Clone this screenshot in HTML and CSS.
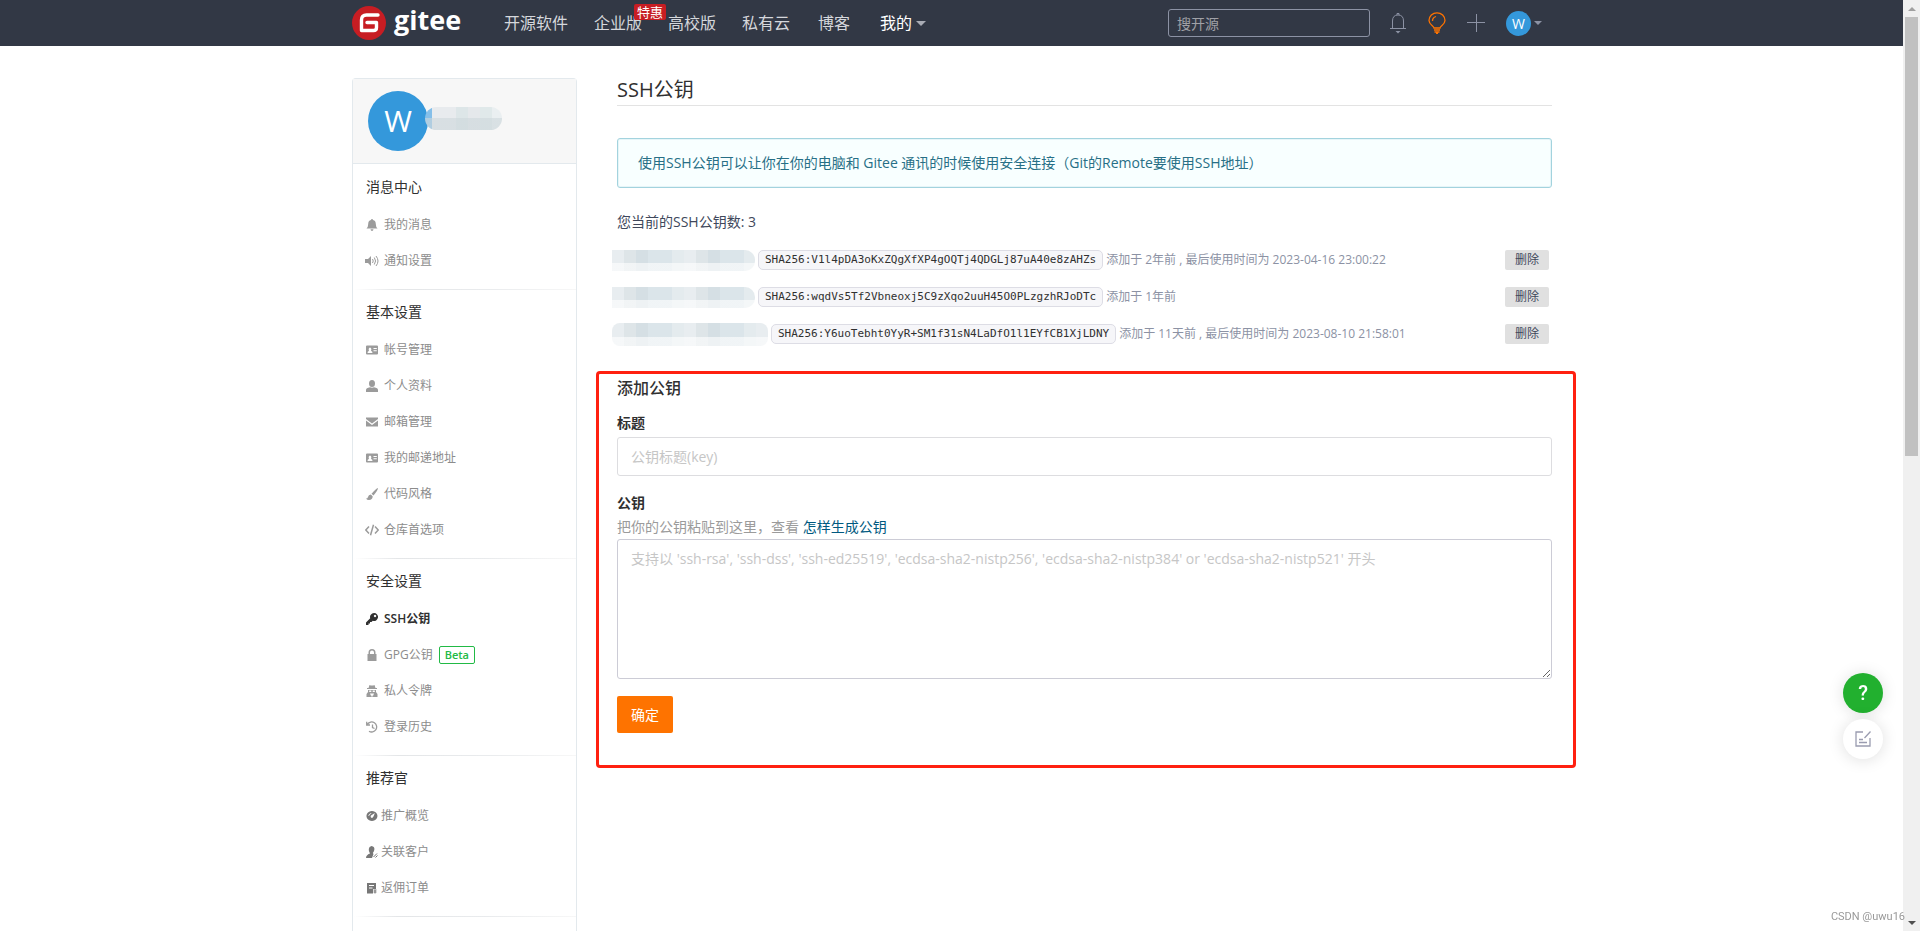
FILE: index.html
```html
<!DOCTYPE html>
<html lang="zh-CN">
<head>
<meta charset="utf-8">
<title>SSH公钥 - Gitee</title>
<link rel="stylesheet" href="styles.css">
</head>
<body>
<header class="topbar">
  <div class="wrap topbar-inner">
    <a class="logo" href="#">
      <svg class="logo-mark" viewBox="0 0 34 34"><circle cx="17" cy="17" r="17" fill="#c71d23"/><path d="M26 9H14.500Q9.500 9 9.500 14V24.500H21.500Q24.500 24.500 24.500 21.500V16.500H15" fill="none" stroke="#fff" stroke-width="3.400" stroke-linejoin="round" stroke-linecap="round"/></svg>
      <span>gitee</span>
    </a>
    <nav class="nav">
      <a href="#">开源软件</a>
      <a class="has-tag" href="#">企业版<span class="tag">特惠</span></a>
      <a href="#">高校版</a>
      <a href="#">私有云</a>
      <a href="#">博客</a>
      <a class="mine" href="#">我的<i class="caret"></i></a>
    </nav>
    <input class="search" type="text" aria-label="搜开源" placeholder="搜开源">
    <div class="tools">
      <a href="#" aria-label="通知"><svg width="18" height="22" viewBox="0 0 18 22" fill="none" stroke="#8c92a4"><path d="M1 16.500H17M3.500 16V9Q3.500 3 9 3T14.500 9V16M8 3V1.500H10V3"/><path d="M6.500 19H11.500L9 21.500Z" fill="#8c92a4" stroke="none"/></svg></a>
      <a href="#" aria-label="提示"><svg width="18" height="22" viewBox="0 0 18 22" fill="none" stroke="#fe7300" stroke-width="1.300"><path d="M6 16C6 13.500 1 13 1 8.600A8 7.800 0 0 1 17 8.600C17 13 12 13.500 12 16ZM4.500 9Q4.500 5.500 8 4.500M6 18H12M6.500 20H11.500M8 21.500H10"/></svg></a>
      <a href="#" aria-label="新建"><svg width="18" height="18" viewBox="0 0 18 18" fill="none" stroke="#8c92a4"><path d="M9.500 0V18M0 8.500H18"/></svg></a>
      <a class="user" href="#"><span class="avatar-small">W</span><i class="caret small"></i></a>
    </div>
  </div>
</header>

<div class="wrap page">
  <aside class="sidebar">
    <div class="profile"><span class="avatar">W</span><span class="mask mask-name"></span></div>
    <section class="group">
      <h2>消息中心</h2>
      <a href="#"><svg viewBox="0 0 12 12"><path d="M6 0Q7 0 7 1Q9.800 1.700 9.800 5Q9.800 8 11.500 9.500H.500Q2.200 8 2.200 5Q2.200 1.700 5 1Q5 0 6 0ZM4.500 10.300H7.500Q7.300 12 6 12T4.500 10.300Z"/></svg>我的消息</a>
      <a href="#"><svg class="wide" viewBox="0 0 14 12"><path d="M0 4H3L6 1V11L3 8H0Z"/><path d="M7.500 4Q9 6 7.500 8M9.300 2.500Q11.800 6 9.300 9.500M11 1Q15 6 11 11" fill="none" stroke="currentColor"/></svg>通知设置</a>
    </section>
    <section class="group">
      <h2>基本设置</h2>
      <a href="#"><svg viewBox="0 0 12 12"><path fill-rule="evenodd" d="M1 1.500H11Q12 1.500 12 2.500V9.500Q12 10.500 11 10.500H1Q0 10.500 0 9.500V2.500Q0 1.500 1 1.500ZM1.500 9H6.500Q6.500 7 5 7Q6 4 4 3.500Q2 4 3 7Q1.500 7 1.500 9ZM7.500 4V5H10.800V4ZM7.500 6.300V7.300H10.800V6.300Z"/></svg>帐号管理</a>
      <a href="#"><svg viewBox="0 0 12 12"><path d="M6 0Q9 .200 9 3.500Q9 7 6 7T3 3.500Q3 .200 6 0ZM0 12V10Q0 8 4 7.300Q6 8.200 8 7.300Q12 8 12 10V12Z"/></svg>个人资料</a>
      <a href="#"><svg viewBox="0 0 12 12"><path d="M0 1.500H12V3L6 7.500L0 3ZM0 4.500L6 9L12 4.500V10.500H0Z"/></svg>邮箱管理</a>
      <a href="#"><svg viewBox="0 0 12 12"><path fill-rule="evenodd" d="M1 1.500H11Q12 1.500 12 2.500V9.500Q12 10.500 11 10.500H1Q0 10.500 0 9.500V2.500Q0 1.500 1 1.500ZM1.500 9H6.500Q6.500 7 5 7Q6 4 4 3.500Q2 4 3 7Q1.500 7 1.500 9ZM7.500 4V5H10.800V4ZM7.500 6.300V7.300H10.800V6.300Z"/></svg>我的邮递地址</a>
      <a href="#"><svg viewBox="0 0 12 12"><path d="M12 0Q12 2 7.500 7.500L5.500 5.800Q10 .500 12 0ZM4.800 6.500L6.700 8.200Q6.500 12 3 12Q1 12 0 10.500Q1.500 10.700 2 9Q2.500 6.500 4.800 6.500Z"/></svg>代码风格</a>
      <a href="#"><svg class="wide" viewBox="0 0 14 12"><path d="M4 2.500L.800 6L4 9.500M10 2.500L13.200 6L10 9.500M8.500 .800L5.500 11.200" fill="none" stroke="currentColor" stroke-width="1.500"/></svg>仓库首选项</a>
    </section>
    <section class="group">
      <h2>安全设置</h2>
      <a class="active" href="#"><svg viewBox="0 0 12 12"><path fill-rule="evenodd" d="M8 0A4 4 0 1 1 6.800 7.800L5.500 9H4V10.500H2.500V12H0V9.500L4.200 5.200A4 4 0 0 1 8 0ZM9 1.800A1.200 1.200 0 1 0 9.100 1.800Z"/></svg>SSH公钥</a>
      <a href="#"><svg viewBox="0 0 12 12"><path fill-rule="evenodd" d="M2.500 5V3.500Q2.500 0 6 0T9.500 3.500V5H10.500V12H1.500V5ZM4 5H8V3.500Q8 1.500 6 1.500T4 3.500Z"/></svg>GPG公钥<span class="beta">Beta</span></a>
      <a href="#"><svg viewBox="0 0 12 12"><path fill-rule="evenodd" d="M3.500 0Q6 1 8.500 0L9.500 3H11V4H1V3H2.500ZM2 5H10V7L11.500 9V12H.500V9L2 7ZM3.200 5.500V7H5.300V5.500ZM6.700 5.500V7H8.800V5.500ZM4 8.500L5.500 12L6 9.500L6.500 12L8 8.500Z"/></svg>私人令牌</a>
      <a href="#"><svg viewBox="0 0 12 12"><path d="M1.500 3.200A5 5 0 1 1 3 10.200M.700 .800V4H4M6.500 3.500V6.500L8.500 7.500" fill="none" stroke="currentColor" stroke-width="1.300"/></svg>登录历史</a>
    </section>
    <section class="group compact">
      <h2>推荐官</h2>
      <a href="#"><svg viewBox="0 0 12 12"><path fill-rule="evenodd" d="M6 1A5.500 5 0 1 1 5.900 1ZM8.800 3L5 5.500Q4 7.500 6 8Q7.500 7.500 8.800 3ZM3 6Q3.500 4 5.500 3.500L5 3Q2.500 4 2.300 6Z"/></svg>推广概览</a>
      <a href="#"><svg viewBox="0 0 12 12"><path d="M5.500 0Q9 .500 8.300 4Q7.800 6 6.800 7L7.500 8L6 12H0Q0 9 4 7.500Q2.500 5.500 2.800 3Q3 .500 5.500 0Z"/><path d="M7.500 11L11 7.500M9.500 11.500L11.500 9.500" stroke="currentColor"/></svg>关联客户</a>
      <a href="#"><svg viewBox="0 0 12 12"><path fill-rule="evenodd" d="M1 1H10V7H7V11.500H1ZM3 3V4H8V3ZM3 5.500V6.500H6.500V5.500Z"/><path d="M7.500 8H10.500M9 8V11.500M7.500 10H10.500" stroke="currentColor"/></svg>返佣订单</a>
    </section>
    <div class="group"></div>
  </aside>

  <main class="main">
    <h1>SSH公钥</h1>
    <p class="notice">使用SSH公钥可以让你在你的电脑和 Gitee 通讯的时候使用安全连接（Git的Remote要使用SSH地址）</p>
    <p class="count">您当前的SSH公钥数: 3</p>
    <ul class="keys">
      <li><span class="mask"></span><code>SHA256:V1l4pDA3oKxZQgXfXP4gOQTj4QDGLj87uA40e8zAHZs</code><span class="when">添加于 2年前 , 最后使用时间为 2023-04-16 23:00:22</span><button type="button">删除</button></li>
      <li><span class="mask"></span><code>SHA256:wqdVs5Tf2Vbneoxj5C9zXqo2uuH45O0PLzgzhRJoDTc</code><span class="when">添加于 1年前</span><button type="button">删除</button></li>
      <li><span class="mask mask-long"></span><code>SHA256:Y6uoTebht0YyR+SM1f31sN4LaDfO1l1EYfCB1XjLDNY</code><span class="when">添加于 11天前 , 最后使用时间为 2023-08-10 21:58:01</span><button type="button">删除</button></li>
    </ul>
    <form class="add-key">
      <h2>添加公钥</h2>
      <label for="title">标题</label>
      <input id="title" type="text" placeholder="公钥标题(key)">
      <label for="key">公钥</label>
      <p class="hint">把你的公钥粘贴到这里，查看 <a href="#">怎样生成公钥</a></p>
      <textarea id="key" placeholder="支持以 'ssh-rsa', 'ssh-dss', 'ssh-ed25519', 'ecdsa-sha2-nistp256', 'ecdsa-sha2-nistp384' or 'ecdsa-sha2-nistp521' 开头"></textarea>
      <button type="button">确定</button>
    </form>
  </main>
</div>

<div class="floating">
  <button class="help" type="button">?</button>
  <button class="feedback" type="button" aria-label="反馈"><svg width="16" height="16" viewBox="0 0 16 16" fill="none" stroke="#9a9cb0" stroke-width="1.300"><path d="M8 1H1V15H15V7M15.500 .500L9.500 7M4 8.500H8M4 11.500H12"/></svg></button>
</div>
<div class="scrollbar"><i class="arrow up"></i><i class="thumb"></i><i class="arrow down"></i></div>
<span class="watermark">CSDN @uwu16</span>
</body>
</html>
```
FILE: styles.css
```css
* { box-sizing: border-box; }
body {
  margin: 0;
  padding-right: 16px;
  height: 100vh;
  overflow: hidden;
  display: flex;
  flex-direction: column;
  background: #fff;
  color: #40485b;
  font: 14px/20px "Open Sans", "Noto Sans CJK SC", sans-serif;
}
h1, h2, p, ul { margin: 0; padding: 0; }
a { text-decoration: none; color: inherit; }
button, input, textarea { font: inherit; }
button { border: 0; padding: 0; cursor: pointer; }
.wrap { width: 100%; max-width: 1200px; margin: 0 auto; }

/* top bar */
.topbar { flex: none; background: #323845; margin-right: -16px; padding-right: 16px; }
.topbar-inner { height: 46px; display: flex; align-items: center; }
.logo { display: flex; align-items: center; gap: 8px; width: 152px; color: #fff; font-size: 27px; font-weight: 700; line-height: 40px; }
.logo span { padding-bottom: 6px; }
.logo-mark { width: 34px; height: 34px; }
.nav { display: flex; gap: 26px; color: #d5d7dc; font-size: 16px; }
.has-tag { position: relative; }
.tag { position: absolute; top: -9px; right: -24px; padding: 0 3px; border-radius: 2px; background: #c71d23; color: #fff; font-size: 13px; line-height: 16px; }
.nav a:nth-child(5) { margin-left: 2px; }
.nav .mine { display: flex; align-items: center; gap: 4px; margin-left: 4px; color: #fff; }
.caret { border: 5px solid transparent; border-top-color: #a9acb5; border-bottom: 0; }
.caret.small { border-width: 4px 4px 0; border-top-color: #8c92a4; }
.search { width: 202px; height: 28px; margin-left: auto; padding: 0 8px; border: 1px solid #8c92a4; border-radius: 3px; background: transparent; color: #fff; }
.search::placeholder { color: #a0a1a7; opacity: 1; }
.tools { display: flex; align-items: center; gap: 21px; width: 182px; padding-left: 19px; }
.tools svg { display: block; }
.user { display: flex; align-items: center; gap: 3px; }
.avatar-small { width: 25px; height: 25px; border-radius: 50%; background: #3498db; color: #fff; font-size: 14px; line-height: 25px; text-align: center; }

/* page */
.page { flex: 1; min-height: 0; display: flex; gap: 40px; padding-top: 32px; }
.sidebar { flex: none; width: 225px; border: 1px solid #e3e9ed; border-bottom: 0; border-radius: 4px 4px 0 0; }
.profile { display: flex; align-items: flex-start; height: 85px; padding: 12px 15px; background: #f7f7f7; border-bottom: 1px solid #e3e9ed; }
.avatar { width: 60px; height: 60px; border-radius: 50%; background: #3498db; color: #fff; font-size: 30px; line-height: 60px; text-align: center; }
.mask {
  flex: none; width: 143px; height: 21px; border-radius: 0 10px 10px 0; margin-right: 3px;
  background:
    linear-gradient(rgba(255,255,255,0) 60%, rgba(255,255,255,.6) 60%),
    repeating-linear-gradient(90deg, #e8edf0 0 12px, #dee5e8 12px 24px, #d5dfe4 24px 36px, #dbe5ea 36px 60px, #e4ebee 60px 72px);
}
.mask-long { width: 156px; height: 23px; border-radius: 8px; }
.mask-name { width: 77px; height: 23px; margin: 16px 0 0 -3px; border-radius: 12px; background: linear-gradient(transparent 50%, rgba(205,215,219,.6) 50%), linear-gradient(90deg, #85bfe9 7px, #e8ebee 7px 31px, #dde6e8 31px 43px, #e5e8eb 43px 55px, #e0e9ea 55px 67px, #eaeff1 67px); }
.group { padding: 13px 13px 10px; background: linear-gradient(90deg, #fff 1px, #e4e6e8 20%, #e9ebed 60%, #f7f7f7) top / 100% 1px no-repeat; }
.profile + .group { background: none; }
.group h2 { margin-bottom: 10px; color: #303030; font-size: 14px; font-weight: 400; }
.group a { display: flex; align-items: center; gap: 6px; height: 36px; color: #8c8c8c; font-size: 12px; }
.group svg { width: 12px; height: 12px; fill: currentColor; color: #9b9b9b; }
.group svg.wide { width: 14px; margin: 0 -1px; }
.compact a { gap: 3px; }
.compact svg { color: #777; }
.group a.active { color: #303030; font-weight: 600; }
.group .active svg { color: #303030; }
.beta { padding: 0 5px; border: 1px solid #21ba45; border-radius: 2px; color: #21ba45; font-size: 11px; font-weight: 600; line-height: 16px; }

/* main column */
.main { flex: 1; min-width: 0; }
h1 { padding-bottom: 3px; border-bottom: 1px solid #e3e3e3; color: #303030; font-size: 20px; font-weight: 400; line-height: 24px; }
.notice { margin: 32px 0 24px; padding: 14px 20px; border: 1px solid #a3d3de; border-radius: 3px; box-shadow: inset 0 0 0 1px #e6f5f8; background: #f8ffff; color: #276f86; }
.keys { display: flex; flex-direction: column; gap: 17px; margin: 18px 3px 0 -5px; list-style: none; font-size: 12px; }
.keys li { display: flex; align-items: center; height: 20px; }
code { padding: 0 6px; border: 1px solid #dddde5; border-radius: 5px; background: #f6f6f9; color: #303030; font: 11px/18px "DejaVu Sans Mono", monospace; }
.when { margin-left: 3px; color: #8c92a4; }
.keys button { width: 44px; height: 20px; margin-left: auto; border-radius: 2px; background: #e0e0e0; color: #40485b; line-height: 20px; }
.add-key { display: flex; flex-direction: column; margin: 27px -24px 0 -21px; padding: 4px 21px 32px 18px; border: 3px solid #ff2010; border-radius: 4px; }
.add-key h2 { margin-bottom: 15px; color: #303030; font-size: 16px; font-weight: 500; }
.add-key label { margin-bottom: 4px; color: #303030; font-weight: 700; }
.add-key input { height: 39px; margin-bottom: 17px; padding: 0 13px; border: 1px solid #dddde0; border-radius: 3px; }
.add-key textarea { display: block; height: 140px; margin-bottom: 17px; padding: 9px 13px; border: 1px solid #ccccd6; border-radius: 3px; }
.add-key ::placeholder { color: #c6c6c6; opacity: 1; }
.hint { margin-bottom: 2px; color: #9b9b9b; }
.hint a { color: #005980; }
.add-key button { width: 56px; height: 37px; border-radius: 2px; background: #fe7300; color: #fff; }

/* overlays */
.floating { position: fixed; right: 37px; bottom: 172px; display: flex; flex-direction: column; gap: 6px; }
.floating button { display: flex; align-items: center; justify-content: center; width: 40px; height: 40px; border-radius: 50%; background: #fff; box-shadow: 0 1px 16px rgba(0,0,0,.13); }
.floating .help { background: #22b02f; color: #fff; font: 500 20px Roboto, sans-serif; }
.scrollbar { position: fixed; inset: 0 0 0 auto; width: 17px; display: flex; flex-direction: column; align-items: center; gap: 6px; padding: 7px 0 6px; background: #f0f0f0; }
.thumb { width: 13px; height: 439px; background: #c1c1c1; }
.arrow { border: 4px solid transparent; }
.up { border-top: 0; border-bottom-color: #a0a0a0; }
.down { margin-top: auto; border-bottom: 0; border-top-color: #505050; }
.watermark { position: fixed; right: 15px; bottom: 4px; color: #999; font: 11px/20px Roboto, sans-serif; }
```
